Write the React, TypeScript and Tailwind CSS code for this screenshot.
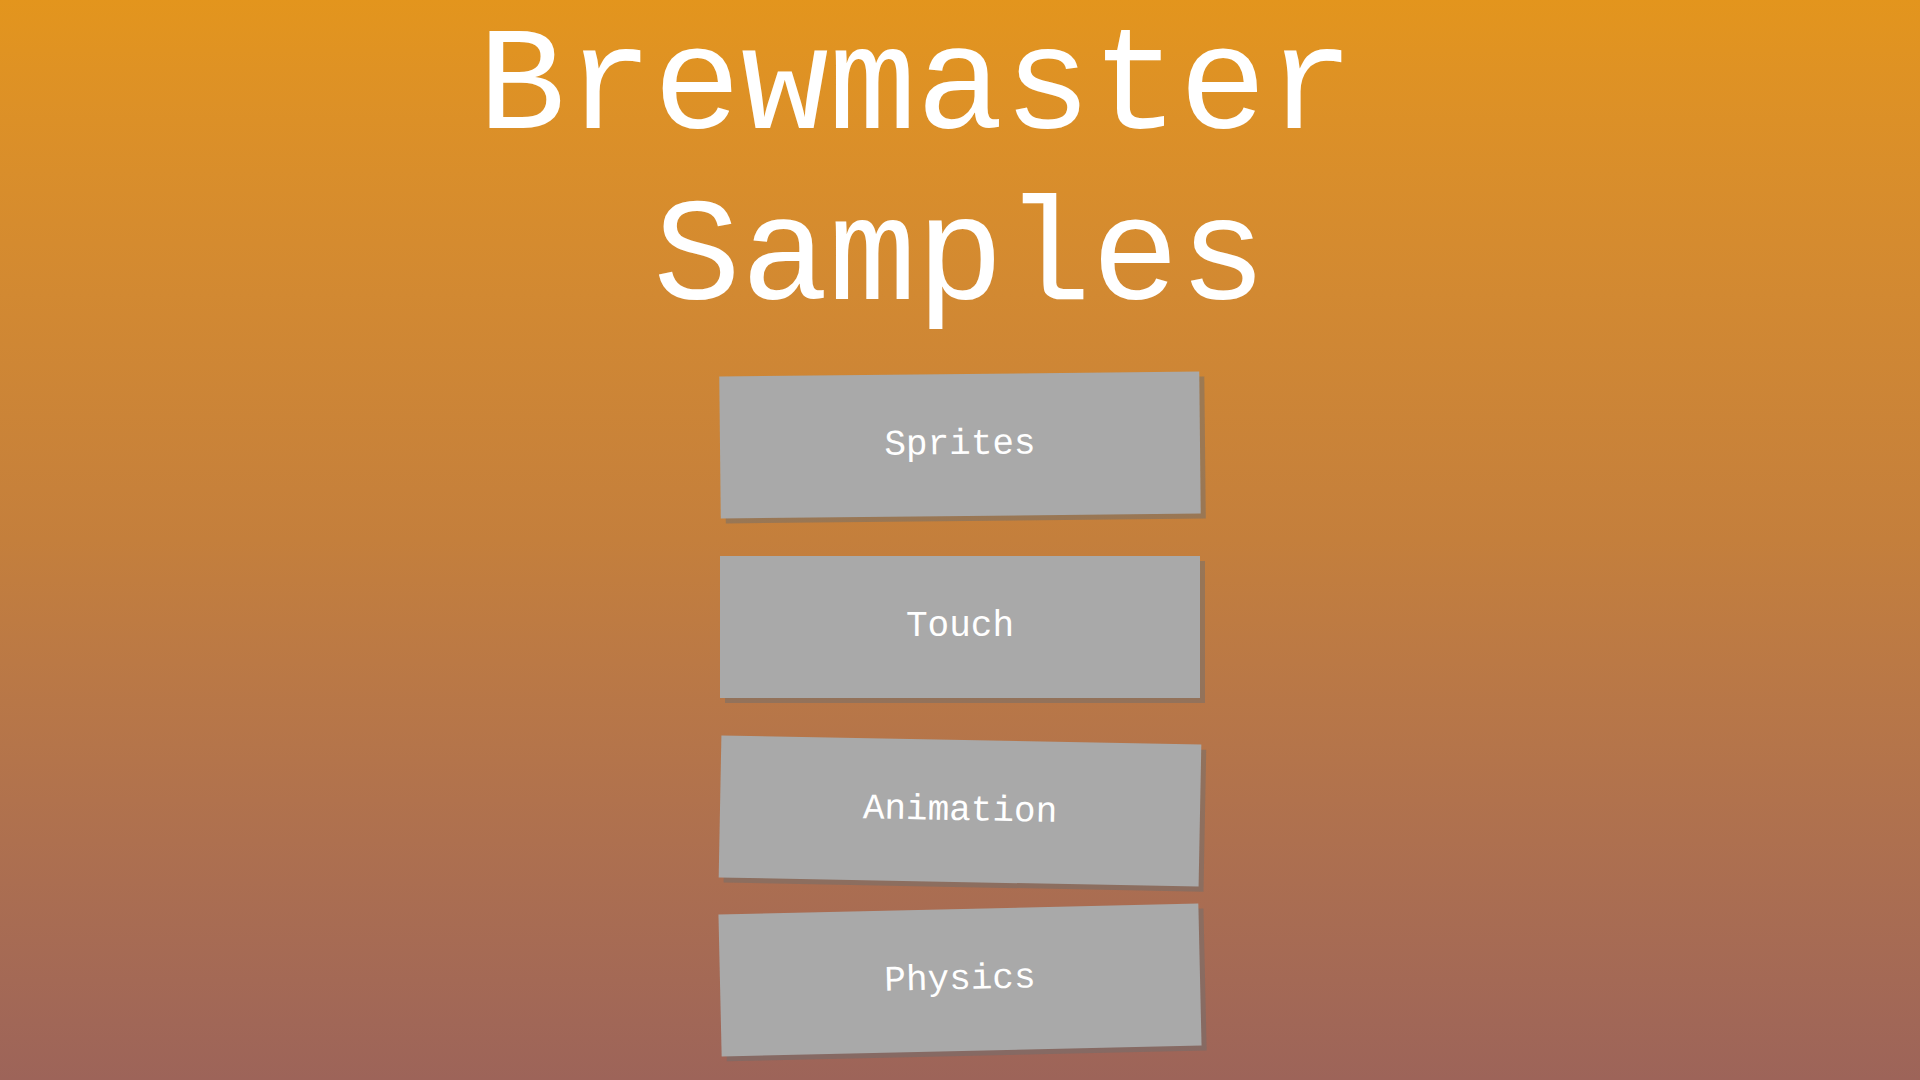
import React from 'react';

const samples = [
  { label: 'Sprites', tilt: '-rotate-[0.6deg]', gap: 'mt-[28px]' },
  { label: 'Touch', tilt: 'rotate-0', gap: 'mt-[40px]' },
  { label: 'Animation', tilt: 'rotate-[1.1deg]', gap: 'mt-[42px]' },
  { label: 'Physics', tilt: '-rotate-[1.3deg]', gap: 'mt-[27px]' },
];

const App: React.FC = () => {
  return (
    <div className="w-full h-[1080px] overflow-hidden bg-gradient-to-b from-[#e3951d] via-[#c47f3c] to-[#9d6459] font-['Courier_New','Nimbus_Mono_PS','FreeMono','Liberation_Mono',monospace] flex flex-col items-center">
      {/* Title */}
      <h1 className="pt-[4px] text-white text-[146px] leading-[171px] text-center whitespace-pre">
        {'Brewmaster\u00a0'}
        <br />
        Samples
      </h1>

      {/* Sample buttons */}
      {samples.map((s) => (
        <button
          key={s.label}
          className={`${s.gap} ${s.tilt} w-[480px] h-[142px] shrink-0 bg-[#a9a9a9] text-white text-[36px] flex items-center justify-center shadow-[5px_5px_0_rgba(110,110,110,0.5)]`}
        >
          {s.label}
        </button>
      ))}
    </div>
  );
};

export default App;
